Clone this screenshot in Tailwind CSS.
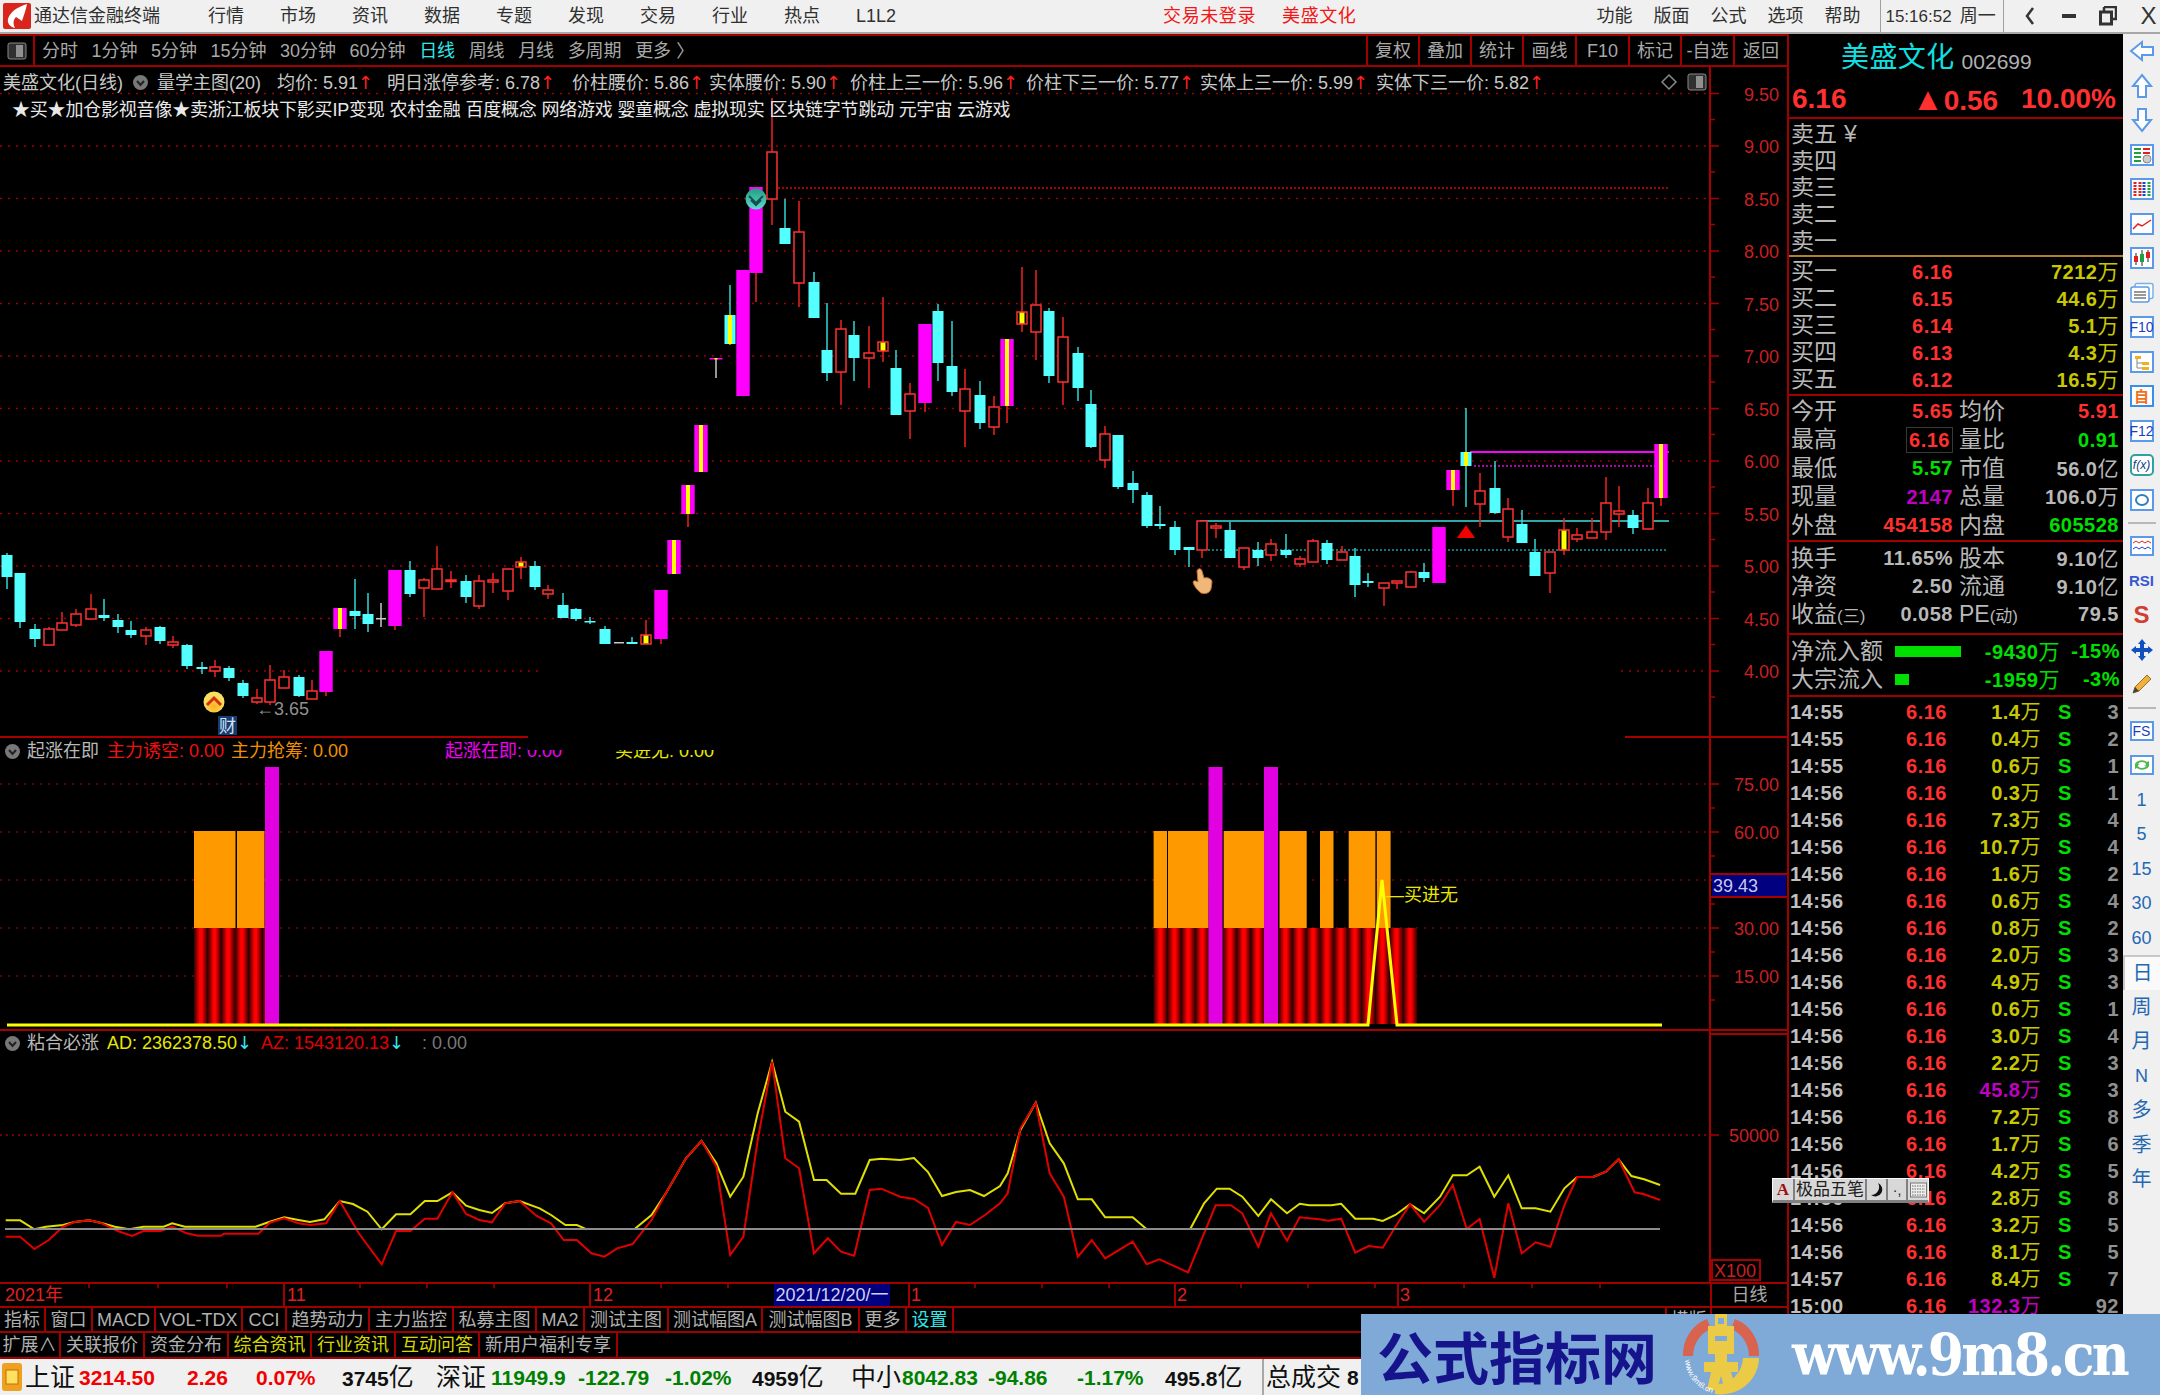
<!DOCTYPE html>
<html>
<head>
<meta charset="utf-8">
<script src="https://cdn.jsdelivr.net/npm/@tailwindcss/browser@4"></script>
<title>通达信金融终端</title>
</head>
<body class="w-[2160px] h-[1395px] relative overflow-hidden bg-black font-['Liberation_Sans','Noto_Sans_CJK_SC',sans-serif] text-[18px] leading-none">

<!-- title bar -->
<div class="h-[34px] flex items-center bg-[#f0f0f0] border-b-2 border-[#a8a8a8] text-[#303030]">
	<svg class="w-[28px] h-[26px] ml-[3px]" viewBox="0 0 28 26"><rect width="28" height="26" rx="2" fill="#d8261c"/><path d="M24 1 C14 4 7 9 5 16 C4 20 7 24 12 25 C10 21 10 17 13 14 L19 18 C21 12 23 6 24 1Z" fill="#fff"/></svg>
	<span class="ml-[3px] w-[174px]">通达信金融终端</span>
	<div class="flex gap-[36px]">
		<span>行情</span><span>市场</span><span>资讯</span><span>数据</span><span>专题</span><span>发现</span><span>交易</span><span>行业</span><span>热点</span><span>L1L2</span>
	</div>
	<span class="ml-[267px] tracking-[0.6px] text-[#f01818]">交易未登录</span>
	<span class="ml-[26px] tracking-[0.6px] text-[#f01818]">美盛文化</span>
	<div class="ml-[240px] flex gap-[21px]"><span>功能</span><span>版面</span><span>公式</span><span>选项</span><span>帮助</span></div>
	<div class="ml-[20px] h-full border-l border-r border-[#a0a0a0] w-[124px] flex items-center pl-[4px] gap-[8px] text-[17px]"><span>15:16:52</span><span class="text-[18px]">周一</span></div>
	<div class="flex items-center gap-[21px] ml-[20px]">
		<svg class="w-[12px] h-[20px]" viewBox="0 0 12 20"><path d="M9 2 L3 10 L9 18" fill="none" stroke="#333" stroke-width="2.5"/></svg>
		<svg class="w-[14px] h-[6px] ml-[5px]" viewBox="0 0 14 6"><rect y="1" width="14" height="4" fill="#333"/></svg>
		<svg class="w-[18px] h-[20px] ml-[2px]" viewBox="0 0 18 20"><path d="M5 1 H17 V13 H13 M5 1 V6" fill="none" stroke="#333" stroke-width="2.5"/><rect x="1.5" y="6" width="11" height="12" fill="none" stroke="#333" stroke-width="3"/></svg>
		<span class="text-[24px] text-[#333] ml-[2px]">X</span>
	</div>
</div>

<div class="flex h-[1325px]">
	<!-- left: period bar, charts, tabs -->
	<div class="w-[1787px] shrink-0 flex flex-col">
		<div class="h-[33px] shrink-0 flex items-center border-y-2 border-[#a00000] text-[#a8a8a8]">
			<div class="w-[35px] h-full border-r-2 border-[#a00000] flex items-center justify-center">
				<svg class="w-[20px] h-[18px]" viewBox="0 0 20 18"><rect x="1" y="1" width="18" height="16" rx="2" fill="#303030" stroke="#888"/><rect x="9" y="3" width="7" height="12" fill="#909090"/></svg>
			</div>
			<div class="ml-[7px] flex gap-[13.5px]">
				<span>分时</span><span>1分钟</span><span>5分钟</span><span>15分钟</span><span>30分钟</span><span>60分钟</span><span class="text-[#30e8e8]">日线</span><span>周线</span><span>月线</span><span>多周期</span><span>更多 〉</span>
			</div>
			<div class="ml-auto h-full flex">
				<span class="w-[52px] h-full border-l-2 border-[#a00000] flex items-center justify-center">复权</span>
				<span class="w-[52px] h-full border-l-2 border-[#a00000] flex items-center justify-center">叠加</span>
				<span class="w-[52px] h-full border-l-2 border-[#a00000] flex items-center justify-center">统计</span>
				<span class="w-[53px] h-full border-l-2 border-[#a00000] flex items-center justify-center">画线</span>
				<span class="w-[53px] h-full border-l-2 border-[#a00000] flex items-center justify-center">F10</span>
				<span class="w-[52px] h-full border-l-2 border-[#a00000] flex items-center justify-center">标记</span>
				<span class="w-[53px] h-full border-l-2 border-[#a00000] flex items-center justify-center">-自选</span>
				<span class="w-[54px] h-full border-l-2 border-[#a00000] flex items-center justify-center">返回</span>
			</div>
		</div>

		<div class="relative h-[1215px] shrink-0">
			<svg id="chart" class="block" width="1787" height="1215" viewBox="0 67 1787 1215" font-family="Liberation Sans, Noto Sans CJK SC, sans-serif" font-size="18"></svg>

			<!-- main chart legend -->
			<div class="absolute left-[3px] top-[3px] h-[25px] flex items-center text-[#c8c8c8]">
				<span class="w-[130px]">美盛文化(日线)</span>
				<span class="w-[24px] flex"><svg class="w-[15px] h-[15px]" viewBox="0 0 15 15"><circle cx="7.5" cy="7.5" r="7.5" fill="#787878"/><path d="M4 6 L7.5 10 L11 6" fill="none" stroke="#222" stroke-width="2"/></svg></span>
				<span class="w-[120px]">量学主图(20)</span>
				<span class="w-[110px]">均价: 5.91<b class="text-[#ff2020] font-normal font-['DejaVu_Sans']">↑</b></span>
				<span class="w-[185px]">明日涨停参考: 6.78<b class="text-[#ff2020] font-normal font-['DejaVu_Sans']">↑</b></span>
				<span class="w-[137px]">价柱腰价: 5.86<b class="text-[#ff2020] font-normal font-['DejaVu_Sans']">↑</b></span>
				<span class="w-[141px]">实体腰价: 5.90<b class="text-[#ff2020] font-normal font-['DejaVu_Sans']">↑</b></span>
				<span class="w-[176px]">价柱上三一价: 5.96<b class="text-[#ff2020] font-normal font-['DejaVu_Sans']">↑</b></span>
				<span class="w-[174px]">价柱下三一价: 5.77<b class="text-[#ff2020] font-normal font-['DejaVu_Sans']">↑</b></span>
				<span class="w-[176px]">实体上三一价: 5.99<b class="text-[#ff2020] font-normal font-['DejaVu_Sans']">↑</b></span>
				<span class="w-[180px]">实体下三一价: 5.82<b class="text-[#ff2020] font-normal font-['DejaVu_Sans']">↑</b></span>
			</div>
			<div class="absolute left-[1660px] top-[6px] flex items-center gap-[9px]">
				<svg class="w-[18px] h-[18px]" viewBox="0 0 18 18"><path d="M9 2 L16 9 L9 16 L2 9Z" fill="none" stroke="#888" stroke-width="1.5"/></svg>
				<svg class="w-[20px] h-[18px]" viewBox="0 0 20 18"><rect x="1" y="1" width="18" height="16" rx="2" fill="#303030" stroke="#888"/><rect x="9" y="3" width="7" height="12" fill="#909090"/></svg>
			</div>
			<div class="absolute left-[12px] top-[30px] h-[25px] flex items-center text-[#e8e8e8] tracking-[-0.2px] whitespace-pre">★买★加仓影视音像★卖浙江板块下影买IP变现 农村金融 百度概念 网络游戏 婴童概念 虚拟现实 区块链字节跳动 元宇宙 云游戏</div>

			<!-- first indicator legend -->
			<div class="absolute left-[5px] top-[672px] h-[24px] flex items-center">
				<svg class="w-[15px] h-[15px] mr-[7px]" viewBox="0 0 15 15"><circle cx="7.5" cy="7.5" r="7.5" fill="#787878"/><path d="M4 6 L7.5 10 L11 6" fill="none" stroke="#222" stroke-width="2"/></svg>
				<span class="w-[80px] text-[#b8b8b8]">起涨在即</span>
				<span class="w-[124px] text-[#f01010]">主力诱空: 0.00</span>
				<span class="w-[214px] text-[#f09000]">主力抢筹: 0.00</span>
				<span class="w-[170px] text-[#f000f0]">起涨在即: 0.00</span>
				<span class="text-[#e8e800]">买进无: 0.00</span>
			</div>
			<div class="absolute left-[528px] top-[667px] w-[1097px] h-[16px] bg-black"></div>

			<!-- second indicator legend -->
			<div class="absolute left-[5px] top-[964px] h-[24px] flex items-center">
				<svg class="w-[15px] h-[15px] mr-[7px]" viewBox="0 0 15 15"><circle cx="7.5" cy="7.5" r="7.5" fill="#787878"/><path d="M4 6 L7.5 10 L11 6" fill="none" stroke="#222" stroke-width="2"/></svg>
				<span class="w-[80px] text-[#b8b8b8]">粘合必涨</span>
				<span class="w-[154px] text-[#e8e800]">AD: 2362378.50<b class="text-[#30e8f0] font-normal font-['DejaVu_Sans']">↓</b></span>
				<span class="w-[161px] text-[#e00000]">AZ: 1543120.13<b class="text-[#30e8f0] font-normal font-['DejaVu_Sans']">↓</b></span>
				<span class="text-[#787878]">: 0.00</span>
			</div>
		</div>

		<!-- date axis -->
		<div class="relative h-[24px] shrink-0 flex items-center border-t-2 border-[#a00000] text-[#e02020]">
			<span class="w-[283px] h-full pl-[5px] flex items-center">2021年</span>
			<span class="w-[306px] h-full pl-[2px] flex items-center border-l-2 border-[#a00000]">11</span>
			<span class="w-[319px] h-full pl-[2px] flex items-center border-l-2 border-[#a00000]">12</span>
			<span class="w-[266px] h-full pl-[1px] flex items-center border-l-2 border-[#a00000]">1</span>
			<span class="w-[223px] h-full pl-[1px] flex items-center border-l-2 border-[#a00000]">2</span>
			<span class="w-[313px] h-full pl-[1px] flex items-center border-l-2 border-[#a00000]">3</span>
			<span class="w-[77px] h-full flex items-center justify-center border-l-2 border-[#a00000] text-[#a8a8a8]">日线</span>
			<span class="absolute left-[774px] top-0 w-[116px] h-full flex items-center justify-center bg-[#000080] text-[#d0d0f0] whitespace-nowrap">2021/12/20/一</span>
			<svg id="dateTicks" class="absolute left-0 top-0" width="1710" height="6"></svg>
		</div>

		<!-- tabs -->
		<div class="h-[25px] shrink-0 flex border-t-2 border-[#a00000] text-[#b0b0b0]">
			<span class="w-[46px] flex items-center justify-center border-r-2 border-[#a00000]">指标</span>
			<span class="w-[47px] flex items-center justify-center border-r-2 border-[#a00000]">窗口</span>
			<span class="w-[63px] flex items-center justify-center border-r-2 border-[#a00000]">MACD</span>
			<span class="w-[87px] flex items-center justify-center border-r-2 border-[#a00000]">VOL-TDX</span>
			<span class="w-[44px] flex items-center justify-center border-r-2 border-[#a00000]">CCI</span>
			<span class="w-[83px] flex items-center justify-center border-r-2 border-[#a00000]">趋势动力</span>
			<span class="w-[84px] flex items-center justify-center border-r-2 border-[#a00000]">主力监控</span>
			<span class="w-[83px] flex items-center justify-center border-r-2 border-[#a00000]">私募主图</span>
			<span class="w-[48px] flex items-center justify-center border-r-2 border-[#a00000]">MA2</span>
			<span class="w-[84px] flex items-center justify-center border-r-2 border-[#a00000]">测试主图</span>
			<span class="w-[94px] flex items-center justify-center border-r-2 border-[#a00000]">测试幅图A</span>
			<span class="w-[97px] flex items-center justify-center border-r-2 border-[#a00000]">测试幅图B</span>
			<span class="w-[47px] flex items-center justify-center border-r-2 border-[#a00000]">更多</span>
			<span class="w-[47px] flex items-center justify-center border-r-2 border-[#a00000] text-[#30e8e8]">设置</span>
			<span class="ml-[711px] w-[47px] flex items-center justify-center border-x-2 border-[#a00000]">横版</span>
		</div>
		<div class="h-[28px] shrink-0 flex border-y-2 border-[#a00000] text-[#b0b0b0]">
			<span class="w-[61px] flex items-center justify-center border-r-2 border-[#a00000]">扩展∧</span>
			<span class="w-[84px] flex items-center justify-center border-r-2 border-[#a00000]">关联报价</span>
			<span class="w-[84px] flex items-center justify-center border-r-2 border-[#a00000]">资金分布</span>
			<span class="w-[83px] flex items-center justify-center border-r-2 border-[#a00000] text-[#d8d800]">综合资讯</span>
			<span class="w-[84px] flex items-center justify-center border-r-2 border-[#a00000] text-[#d8d800]">行业资讯</span>
			<span class="w-[84px] flex items-center justify-center border-r-2 border-[#a00000] text-[#d8d800]">互动问答</span>
			<span class="w-[138px] flex items-center justify-center border-r-2 border-[#a00000]">新用户福利专享</span>
		</div>
	</div>

	<!-- quote panel -->
	<div class="w-[336px] shrink-0 flex flex-col overflow-hidden border-l-2 border-[#a00000] text-[23px] text-[#b8b8b8]">
		<div class="h-[47px] shrink-0 flex items-center pl-[52px]">
			<span class="text-[28px] text-[#10e0e0] tracking-[0.4px]">美盛文化</span>
			<span class="ml-[7px] mt-[8px] text-[21px] text-[#b0b0b0]">002699</span>
		</div>
		<div class="h-[38px] shrink-0 flex items-center pl-[3px] border-b-2 border-[#a00000] text-[28px] font-bold text-[#ff3030]">
			<span class="w-[120px]">6.16</span>
			<span class="w-[109px] whitespace-nowrap"><span class="text-[32px] leading-none">▲</span>0.56</span>
			<span>10.00%</span>
		</div>
		<div class="h-[138px] shrink-0 flex flex-col pl-[2px] pt-[2px] border-b-2 border-[#b08030]">
			<div class="h-[27.2px] flex items-center">卖五<span class="ml-[7px] text-[#b8b8b8]">¥</span></div>
			<div class="h-[27.2px] flex items-center">卖四</div>
			<div class="h-[27.2px] flex items-center">卖三</div>
			<div class="h-[27.2px] flex items-center">卖二</div>
			<div class="h-[27.2px] flex items-center">卖一</div>
		</div>
		<div class="h-[139px] shrink-0 flex flex-col pl-[2px] pt-[1px] border-b-2 border-[#a00000]">
			<div class="h-[27px] flex items-center"><span class="w-[50px]">买一</span><span class="w-[112px] text-right text-[20px] font-bold tracking-[0.5px] text-[#ff3030]">6.16</span><span class="w-[166px] text-right text-[20px] font-bold tracking-[0.5px] text-[#c8c800]">7212<span class="font-normal text-[21px]">万</span></span></div>
			<div class="h-[27px] flex items-center"><span class="w-[50px]">买二</span><span class="w-[112px] text-right text-[20px] font-bold tracking-[0.5px] text-[#ff3030]">6.15</span><span class="w-[166px] text-right text-[20px] font-bold tracking-[0.5px] text-[#c8c800]">44.6<span class="font-normal text-[21px]">万</span></span></div>
			<div class="h-[27px] flex items-center"><span class="w-[50px]">买三</span><span class="w-[112px] text-right text-[20px] font-bold tracking-[0.5px] text-[#ff3030]">6.14</span><span class="w-[166px] text-right text-[20px] font-bold tracking-[0.5px] text-[#c8c800]">5.1<span class="font-normal text-[21px]">万</span></span></div>
			<div class="h-[27px] flex items-center"><span class="w-[50px]">买四</span><span class="w-[112px] text-right text-[20px] font-bold tracking-[0.5px] text-[#ff3030]">6.13</span><span class="w-[166px] text-right text-[20px] font-bold tracking-[0.5px] text-[#c8c800]">4.3<span class="font-normal text-[21px]">万</span></span></div>
			<div class="h-[27px] flex items-center"><span class="w-[50px]">买五</span><span class="w-[112px] text-right text-[20px] font-bold tracking-[0.5px] text-[#ff3030]">6.12</span><span class="w-[166px] text-right text-[20px] font-bold tracking-[0.5px] text-[#c8c800]">16.5<span class="font-normal text-[21px]">万</span></span></div>
		</div>
		<div class="h-[146px] shrink-0 flex flex-col pl-[2px] pt-[1px] border-b-2 border-[#a00000]">
			<div class="h-[28.5px] shrink-0 flex items-center"><span class="w-[50px]">今开</span><span class="w-[112px] text-right text-[20px] font-bold tracking-[0.5px] text-[#ff3030]">5.65</span><span class="w-[56px] ml-[6px]">均价</span><span class="w-[104px] text-right text-[20px] font-bold tracking-[0.5px] text-[#ff3030]">5.91</span></div>
			<div class="h-[28.5px] shrink-0 flex items-center"><span class="w-[50px]">最高</span><span class="w-[112px] flex justify-end"><span class="px-[2px] border border-[#383838] text-[20px] leading-[24px] font-bold tracking-[0.5px] text-[#ff3030]">6.16</span></span><span class="w-[56px] ml-[6px]">量比</span><span class="w-[104px] text-right text-[20px] font-bold tracking-[0.5px] text-[#00e000]">0.91</span></div>
			<div class="h-[28.5px] shrink-0 flex items-center"><span class="w-[50px]">最低</span><span class="w-[112px] text-right text-[20px] font-bold tracking-[0.5px] text-[#00e000]">5.57</span><span class="w-[56px] ml-[6px]">市值</span><span class="w-[104px] text-right text-[20px] font-bold tracking-[0.5px]">56.0<span class="font-normal text-[21px]">亿</span></span></div>
			<div class="h-[28.5px] shrink-0 flex items-center"><span class="w-[50px]">现量</span><span class="w-[112px] text-right text-[20px] font-bold tracking-[0.5px] text-[#c000c0]">2147</span><span class="w-[56px] ml-[6px]">总量</span><span class="w-[104px] text-right text-[20px] font-bold tracking-[0.5px]">106.0<span class="font-normal text-[21px]">万</span></span></div>
			<div class="h-[28.5px] shrink-0 flex items-center"><span class="w-[50px]">外盘</span><span class="w-[112px] text-right text-[20px] font-bold tracking-[0.5px] text-[#ff3030]">454158</span><span class="w-[56px] ml-[6px]">内盘</span><span class="w-[104px] text-right text-[20px] font-bold tracking-[0.5px] text-[#00e000]">605528</span></div>
		</div>
		<div class="h-[93px] shrink-0 flex flex-col pl-[2px] pt-[2px] border-b-2 border-[#a00000]">
			<div class="h-[28px] flex items-center"><span class="w-[50px]">换手</span><span class="w-[112px] text-right text-[20px] font-bold tracking-[0.5px]">11.65%</span><span class="w-[56px] ml-[6px]">股本</span><span class="w-[104px] text-right text-[20px] font-bold tracking-[0.5px]">9.10<span class="font-normal text-[21px]">亿</span></span></div>
			<div class="h-[28px] flex items-center"><span class="w-[50px]">净资</span><span class="w-[112px] text-right text-[20px] font-bold tracking-[0.5px]">2.50</span><span class="w-[56px] ml-[6px]">流通</span><span class="w-[104px] text-right text-[20px] font-bold tracking-[0.5px]">9.10<span class="font-normal text-[21px]">亿</span></span></div>
			<div class="h-[28px] flex items-center"><span class="w-[74px] whitespace-nowrap">收益<span class="text-[17px]">(三)</span></span><span class="w-[88px] text-right text-[20px] font-bold tracking-[0.5px]">0.058</span><span class="w-[72px] ml-[6px] whitespace-nowrap">PE<span class="text-[17px]">(动)</span></span><span class="w-[88px] text-right text-[20px] font-bold tracking-[0.5px]">79.5</span></div>
		</div>
		<div class="h-[62px] shrink-0 flex flex-col pl-[2px] pt-[2px] border-b-2 border-[#a00000] text-[#00e000]">
			<div class="h-[28px] flex items-center"><span class="w-[104px] text-[#b8b8b8]">净流入额</span><span class="w-[66px] h-[11px] bg-[#00e000]"></span><span class="w-[99px] text-right text-[20px] font-bold tracking-[0.5px]">-9430<span class="font-normal text-[21px]">万</span></span><span class="w-[60px] text-right text-[20px] font-bold tracking-[0.5px]">-15%</span></div>
			<div class="h-[28px] flex items-center"><span class="w-[104px] text-[#b8b8b8]">大宗流入</span><span class="w-[14px] h-[11px] bg-[#00e000]"></span><span class="w-[151px] text-right text-[20px] font-bold tracking-[0.5px]">-1959<span class="font-normal text-[21px]">万</span></span><span class="w-[60px] text-right text-[20px] font-bold tracking-[0.5px]">-3%</span></div>
		</div>
		<div class="flex flex-col pl-[1px] text-[20px] font-bold tracking-[0.5px] text-[#c0c0c0] pt-[1px]">
			<div class="h-[27.04px] flex items-center"><span class="w-[61px]">14:55</span><span class="w-[96px] text-right text-[#ff3030]">6.16</span><span class="w-[94px] text-right text-[#c8c800]">1.4<span class="font-normal">万</span></span><span class="w-[48px] text-center text-[#00e000]">S</span><span class="w-[30px] text-right text-[#909090]">3</span></div>
			<div class="h-[27.04px] flex items-center"><span class="w-[61px]">14:55</span><span class="w-[96px] text-right text-[#ff3030]">6.16</span><span class="w-[94px] text-right text-[#c8c800]">0.4<span class="font-normal">万</span></span><span class="w-[48px] text-center text-[#00e000]">S</span><span class="w-[30px] text-right text-[#909090]">2</span></div>
			<div class="h-[27.04px] flex items-center"><span class="w-[61px]">14:55</span><span class="w-[96px] text-right text-[#ff3030]">6.16</span><span class="w-[94px] text-right text-[#c8c800]">0.6<span class="font-normal">万</span></span><span class="w-[48px] text-center text-[#00e000]">S</span><span class="w-[30px] text-right text-[#909090]">1</span></div>
			<div class="h-[27.04px] flex items-center"><span class="w-[61px]">14:56</span><span class="w-[96px] text-right text-[#ff3030]">6.16</span><span class="w-[94px] text-right text-[#c8c800]">0.3<span class="font-normal">万</span></span><span class="w-[48px] text-center text-[#00e000]">S</span><span class="w-[30px] text-right text-[#909090]">1</span></div>
			<div class="h-[27.04px] flex items-center"><span class="w-[61px]">14:56</span><span class="w-[96px] text-right text-[#ff3030]">6.16</span><span class="w-[94px] text-right text-[#c8c800]">7.3<span class="font-normal">万</span></span><span class="w-[48px] text-center text-[#00e000]">S</span><span class="w-[30px] text-right text-[#909090]">4</span></div>
			<div class="h-[27.04px] flex items-center"><span class="w-[61px]">14:56</span><span class="w-[96px] text-right text-[#ff3030]">6.16</span><span class="w-[94px] text-right text-[#c8c800]">10.7<span class="font-normal">万</span></span><span class="w-[48px] text-center text-[#00e000]">S</span><span class="w-[30px] text-right text-[#909090]">4</span></div>
			<div class="h-[27.04px] flex items-center"><span class="w-[61px]">14:56</span><span class="w-[96px] text-right text-[#ff3030]">6.16</span><span class="w-[94px] text-right text-[#c8c800]">1.6<span class="font-normal">万</span></span><span class="w-[48px] text-center text-[#00e000]">S</span><span class="w-[30px] text-right text-[#909090]">2</span></div>
			<div class="h-[27.04px] flex items-center"><span class="w-[61px]">14:56</span><span class="w-[96px] text-right text-[#ff3030]">6.16</span><span class="w-[94px] text-right text-[#c8c800]">0.6<span class="font-normal">万</span></span><span class="w-[48px] text-center text-[#00e000]">S</span><span class="w-[30px] text-right text-[#909090]">4</span></div>
			<div class="h-[27.04px] flex items-center"><span class="w-[61px]">14:56</span><span class="w-[96px] text-right text-[#ff3030]">6.16</span><span class="w-[94px] text-right text-[#c8c800]">0.8<span class="font-normal">万</span></span><span class="w-[48px] text-center text-[#00e000]">S</span><span class="w-[30px] text-right text-[#909090]">2</span></div>
			<div class="h-[27.04px] flex items-center"><span class="w-[61px]">14:56</span><span class="w-[96px] text-right text-[#ff3030]">6.16</span><span class="w-[94px] text-right text-[#c8c800]">2.0<span class="font-normal">万</span></span><span class="w-[48px] text-center text-[#00e000]">S</span><span class="w-[30px] text-right text-[#909090]">3</span></div>
			<div class="h-[27.04px] flex items-center"><span class="w-[61px]">14:56</span><span class="w-[96px] text-right text-[#ff3030]">6.16</span><span class="w-[94px] text-right text-[#c8c800]">4.9<span class="font-normal">万</span></span><span class="w-[48px] text-center text-[#00e000]">S</span><span class="w-[30px] text-right text-[#909090]">3</span></div>
			<div class="h-[27.04px] flex items-center"><span class="w-[61px]">14:56</span><span class="w-[96px] text-right text-[#ff3030]">6.16</span><span class="w-[94px] text-right text-[#c8c800]">0.6<span class="font-normal">万</span></span><span class="w-[48px] text-center text-[#00e000]">S</span><span class="w-[30px] text-right text-[#909090]">1</span></div>
			<div class="h-[27.04px] flex items-center"><span class="w-[61px]">14:56</span><span class="w-[96px] text-right text-[#ff3030]">6.16</span><span class="w-[94px] text-right text-[#c8c800]">3.0<span class="font-normal">万</span></span><span class="w-[48px] text-center text-[#00e000]">S</span><span class="w-[30px] text-right text-[#909090]">4</span></div>
			<div class="h-[27.04px] flex items-center"><span class="w-[61px]">14:56</span><span class="w-[96px] text-right text-[#ff3030]">6.16</span><span class="w-[94px] text-right text-[#c8c800]">2.2<span class="font-normal">万</span></span><span class="w-[48px] text-center text-[#00e000]">S</span><span class="w-[30px] text-right text-[#909090]">3</span></div>
			<div class="h-[27.04px] flex items-center"><span class="w-[61px]">14:56</span><span class="w-[96px] text-right text-[#ff3030]">6.16</span><span class="w-[94px] text-right text-[#c000c0]">45.8<span class="font-normal">万</span></span><span class="w-[48px] text-center text-[#00e000]">S</span><span class="w-[30px] text-right text-[#909090]">3</span></div>
			<div class="h-[27.04px] flex items-center"><span class="w-[61px]">14:56</span><span class="w-[96px] text-right text-[#ff3030]">6.16</span><span class="w-[94px] text-right text-[#c8c800]">7.2<span class="font-normal">万</span></span><span class="w-[48px] text-center text-[#00e000]">S</span><span class="w-[30px] text-right text-[#909090]">8</span></div>
			<div class="h-[27.04px] flex items-center"><span class="w-[61px]">14:56</span><span class="w-[96px] text-right text-[#ff3030]">6.16</span><span class="w-[94px] text-right text-[#c8c800]">1.7<span class="font-normal">万</span></span><span class="w-[48px] text-center text-[#00e000]">S</span><span class="w-[30px] text-right text-[#909090]">6</span></div>
			<div class="h-[27.04px] flex items-center"><span class="w-[61px]">14:56</span><span class="w-[96px] text-right text-[#ff3030]">6.16</span><span class="w-[94px] text-right text-[#c8c800]">4.2<span class="font-normal">万</span></span><span class="w-[48px] text-center text-[#00e000]">S</span><span class="w-[30px] text-right text-[#909090]">5</span></div>
			<div class="h-[27.04px] flex items-center"><span class="w-[61px]">14:56</span><span class="w-[96px] text-right text-[#ff3030]">6.16</span><span class="w-[94px] text-right text-[#c8c800]">2.8<span class="font-normal">万</span></span><span class="w-[48px] text-center text-[#00e000]">S</span><span class="w-[30px] text-right text-[#909090]">8</span></div>
			<div class="h-[27.04px] flex items-center"><span class="w-[61px]">14:56</span><span class="w-[96px] text-right text-[#ff3030]">6.16</span><span class="w-[94px] text-right text-[#c8c800]">3.2<span class="font-normal">万</span></span><span class="w-[48px] text-center text-[#00e000]">S</span><span class="w-[30px] text-right text-[#909090]">5</span></div>
			<div class="h-[27.04px] flex items-center"><span class="w-[61px]">14:56</span><span class="w-[96px] text-right text-[#ff3030]">6.16</span><span class="w-[94px] text-right text-[#c8c800]">8.1<span class="font-normal">万</span></span><span class="w-[48px] text-center text-[#00e000]">S</span><span class="w-[30px] text-right text-[#909090]">5</span></div>
			<div class="h-[27.04px] flex items-center"><span class="w-[61px]">14:57</span><span class="w-[96px] text-right text-[#ff3030]">6.16</span><span class="w-[94px] text-right text-[#c8c800]">8.4<span class="font-normal">万</span></span><span class="w-[48px] text-center text-[#00e000]">S</span><span class="w-[30px] text-right text-[#909090]">7</span></div>
			<div class="h-[27.04px] flex items-center"><span class="w-[61px]">15:00</span><span class="w-[96px] text-right text-[#ff3030]">6.16</span><span class="w-[94px] text-right text-[#c000c0]">132.3<span class="font-normal">万</span></span><span class="w-[48px]"></span><span class="w-[30px] text-right text-[#909090]">92</span></div>
		</div>
	</div>

	<!-- right tool strip -->
	<div class="w-[37px] shrink-0 bg-[#f0f0f0] flex flex-col items-center text-[#2468b4] text-[18px]">
		<div class="h-[34.5px] flex items-center"><svg class="w-[26px] h-[24px]" viewBox="0 0 26 24"><path d="M2 12 L13 3 V8 H24 V16 H13 V21Z" fill="#fff" stroke="#5a9ae8" stroke-width="2"/></svg></div>
		<div class="h-[34.5px] flex items-center"><svg class="w-[24px] h-[26px]" viewBox="0 0 24 26"><path d="M12 2 L21 13 H16 V24 H8 V13 H3Z" fill="#fff" stroke="#5a9ae8" stroke-width="2"/></svg></div>
		<div class="h-[34.5px] flex items-center"><svg class="w-[24px] h-[26px]" viewBox="0 0 24 26"><path d="M12 24 L21 13 H16 V2 H8 V13 H3Z" fill="#fff" stroke="#5a9ae8" stroke-width="2"/></svg></div>
		<div class="h-[34.5px] flex items-center"><svg class="w-[24px] h-[22px]" viewBox="0 0 24 22"><rect x="1" y="1" width="22" height="20" fill="#fff" stroke="#5a9ae8" stroke-width="2"/><path d="M4 5h7M4 9h7M4 13h7M4 17h7" stroke="#20a040" stroke-width="2"/><path d="M13 5h7M13 9h7" stroke="#e02020" stroke-width="2"/><circle cx="17" cy="15" r="4" fill="#ccc" stroke="#888"/></svg></div>
		<div class="h-[34.5px] flex items-center"><svg class="w-[24px] h-[22px]" viewBox="0 0 24 22"><rect x="1" y="1" width="22" height="20" fill="#fff" stroke="#5a9ae8" stroke-width="2"/><path d="M5 4v14M10 4v14" stroke="#e02020" stroke-width="3" stroke-dasharray="2 1"/><path d="M14 4v14" stroke="#2040d0" stroke-width="3" stroke-dasharray="2 1"/><path d="M19 4v14" stroke="#20a040" stroke-width="3" stroke-dasharray="2 1"/></svg></div>
		<div class="h-[34.5px] flex items-center"><svg class="w-[24px] h-[22px]" viewBox="0 0 24 22"><rect x="1" y="1" width="22" height="20" fill="#fff" stroke="#5a9ae8" stroke-width="2"/><path d="M3 16 L8 11 L12 13 L21 7" fill="none" stroke="#e02020" stroke-width="1.5"/></svg></div>
		<div class="h-[34.5px] flex items-center"><svg class="w-[24px] h-[22px]" viewBox="0 0 24 22"><rect x="1" y="1" width="22" height="20" fill="#fff" stroke="#5a9ae8" stroke-width="2"/><path d="M6 6v12M12 3v16M18 3v12" stroke="#222" stroke-width="1"/><rect x="4" y="9" width="4" height="6" fill="#e02020"/><rect x="10" y="7" width="4" height="8" fill="#20a040"/><rect x="16" y="5" width="4" height="6" fill="#e02020"/></svg></div>
		<div class="h-[34.5px] flex items-center"><svg class="w-[24px] h-[22px]" viewBox="0 0 24 22"><rect x="5" y="1.5" width="18" height="15" rx="2" fill="#fff" stroke="#7ab0e8" stroke-width="1.5"/><rect x="1" y="5" width="18" height="15" rx="2" fill="#fff" stroke="#5a9ae8" stroke-width="1.5"/><path d="M4 10h12M4 13h12M4 16h12" stroke="#777" stroke-width="1.5"/></svg></div>
		<div class="h-[34.5px] flex items-center"><span class="w-[24px] h-[22px] bg-white border-2 border-[#5a9ae8] flex items-center justify-center text-[14px] text-[#2040c0]">F10</span></div>
		<div class="h-[34.5px] flex items-center"><svg class="w-[24px] h-[22px]" viewBox="0 0 24 22"><rect x="1" y="1" width="22" height="20" fill="#fff" stroke="#5a9ae8" stroke-width="2"/><path d="M5 5h6v3h-6zM12 11h7v3h-7zM12 16h7v3h-7z" fill="#f0b020"/><path d="M7 8v9h5M7 12h5" stroke="#888" fill="none"/></svg></div>
		<div class="h-[34.5px] flex items-center"><span class="w-[24px] h-[22px] bg-white border-2 border-[#3a90e8] flex items-center justify-center text-[15px] font-bold text-[#f07020]">自</span></div>
		<div class="h-[34.5px] flex items-center"><span class="w-[24px] h-[22px] bg-white border-2 border-[#5a9ae8] flex items-center justify-center text-[14px] text-[#2040c0]">F12</span></div>
		<div class="h-[34.5px] flex items-center"><span class="w-[24px] h-[22px] bg-white border-2 border-[#30a0a0] rounded-[5px] flex items-center justify-center text-[12px] italic text-[#104080]">f(x)</span></div>
		<div class="h-[34.5px] flex items-center"><svg class="w-[24px] h-[22px]" viewBox="0 0 24 22"><rect x="1" y="1" width="22" height="20" fill="#fff" stroke="#5a9ae8" stroke-width="2"/><ellipse cx="12" cy="11" rx="6" ry="5" fill="none" stroke="#3080c0" stroke-width="2"/></svg></div>
		<div class="h-[12px] w-full flex items-center"><div class="w-[28px] mx-auto border-t-2 border-[#b8b8b8]"></div></div>
		<div class="h-[34.5px] flex items-center"><svg class="w-[24px] h-[20px]" viewBox="0 0 24 20"><rect x="1" y="1" width="22" height="18" fill="#fff" stroke="#5a9ae8" stroke-width="2"/><path d="M3 7l3-2 3 2 3-2 3 2 3-2 3 2" fill="none" stroke="#e02020"/><path d="M3 13l3-2 3 2 3-2 3 2 3-2 3 2" fill="none" stroke="#2040d0"/></svg></div>
		<div class="h-[34.5px] flex items-center font-bold text-[15px] text-[#3858d0]">RSI</div>
		<div class="h-[34.5px] flex items-center font-bold text-[24px] text-[#d04030]">S</div>
		<div class="h-[34.5px] flex items-center"><svg class="w-[24px] h-[24px]" viewBox="0 0 24 24"><path d="M12 1 L16 6 H14 V10 H18 V8 L23 12 L18 16 V14 H14 V18 H16 L12 23 L8 18 H10 V14 H6 V16 L1 12 L6 8 V10 H10 V6 H8Z" fill="#1050c0"/></svg></div>
		<div class="h-[34.5px] flex items-center"><svg class="w-[24px] h-[24px]" viewBox="0 0 24 24"><path d="M3 21 L5 15 L17 3 L21 7 L9 19Z" fill="#f0b040" stroke="#a07020"/><path d="M3 21 L5 15 L9 19Z" fill="#444"/></svg></div>
		<div class="h-[12px] w-full flex items-center"><div class="w-[28px] mx-auto border-t-2 border-[#b8b8b8]"></div></div>
		<div class="h-[34.5px] flex items-center"><span class="w-[24px] h-[20px] bg-white border-2 border-[#5a9ae8] flex items-center justify-center text-[14px] text-[#2040c0]">FS</span></div>
		<div class="h-[34.5px] flex items-center"><svg class="w-[24px] h-[20px]" viewBox="0 0 24 20"><rect x="1" y="1" width="22" height="18" fill="#fff" stroke="#5a9ae8" stroke-width="2"/><path d="M5 9a7 5 0 0 1 12-2l2-1v5h-5l2-1a4 3 0 0 0-8 0zM19 11a7 5 0 0 1-12 2l-2 1v-5h5l-2 1a4 3 0 0 0 8 0z" fill="#50b850"/></svg></div>
		<div class="h-[34.5px] flex items-center">1</div>
		<div class="h-[34.5px] flex items-center">5</div>
		<div class="h-[34.5px] flex items-center">15</div>
		<div class="h-[34.5px] flex items-center">30</div>
		<div class="h-[34.5px] flex items-center">60</div>
		<div class="h-[34.5px] w-full flex items-center justify-center text-[20px] bg-[#fafafa] border-t-2 border-l-2 border-[#c8c8c8]">日</div>
		<div class="h-[34.5px] flex items-center text-[20px]">周</div>
		<div class="h-[34.5px] flex items-center text-[20px]">月</div>
		<div class="h-[34.5px] flex items-center">N</div>
		<div class="h-[34.5px] flex items-center text-[20px]">多</div>
		<div class="h-[34.5px] flex items-center text-[20px]">季</div>
		<div class="h-[34.5px] flex items-center text-[20px]">年</div>
	</div>
</div>

<!-- index status bar -->
<div class="h-[36px] flex items-center bg-[#f0f0f0] text-[21px] font-bold text-[#101010] whitespace-nowrap">
	<span class="w-[25px] flex pl-[2px]"><svg class="w-[20px] h-[28px]" viewBox="0 0 20 28"><rect width="20" height="28" rx="3" fill="#f0a020"/><rect x="4" y="7" width="12" height="14" fill="#ffe060" stroke="#c07000"/></svg></span>
	<span class="w-[54px] text-[25px] font-normal">上证</span>
	<span class="w-[108px] text-[#f00000]">3214.50</span>
	<span class="w-[69px] text-[#f00000]">2.26</span>
	<span class="w-[86px] text-[#f00000]">0.07%</span>
	<span class="w-[94px]">3745<span class="text-[25px] font-normal">亿</span></span>
	<span class="w-[55px] text-[25px] font-normal">深证</span>
	<span class="w-[87px] text-[#008000]">11949.9</span>
	<span class="w-[87px] text-[#008000]">-122.79</span>
	<span class="w-[87px] text-[#008000]">-1.02%</span>
	<span class="w-[99px]">4959<span class="text-[25px] font-normal">亿</span></span>
	<span class="w-[51px] text-[25px] font-normal">中小</span>
	<span class="w-[86px] text-[#008000]">8042.83</span>
	<span class="w-[89px] text-[#008000]">-94.86</span>
	<span class="w-[88px] text-[#008000]">-1.17%</span>
	<span class="w-[97px]">495.8<span class="text-[25px] font-normal">亿</span></span>
	<span class="w-[4px] h-full border-l-2 border-[#a8a8a8]"></span>
	<span class="w-[81px] text-[25px] font-normal">总成交</span>
	<span>8</span>
</div>

<!-- input method bar -->
<div class="absolute left-[1772px] top-[1178px] w-[157px] h-[25px] flex bg-[#d8d8d8] border border-[#f8f8f8] border-b-[3px] border-b-[#808080] text-[#202020] text-[17px]">
	<span class="w-[22px] flex items-center justify-center font-bold text-[#a01010] border-r-2 border-[#808080] font-['Liberation_Serif']">A</span>
	<span class="w-[72px] flex items-center justify-center whitespace-nowrap border-r-2 border-[#808080]">极品五笔</span>
	<span class="w-[21px] flex items-center justify-center border-r-2 border-[#808080]"><svg class="w-[14px] h-[16px]" viewBox="0 0 14 16"><path d="M8 1 A7 7 0 1 1 1 13 A8 8 0 0 0 8 1Z" fill="#111"/></svg></span>
	<span class="w-[20px] flex items-center justify-center border-r-2 border-[#808080] text-[14px]">·,</span>
	<span class="flex-1 flex items-center justify-center"><svg class="w-[17px] h-[16px]" viewBox="0 0 17 16"><rect x="0.5" y="1" width="16" height="14" fill="#eee" stroke="#777"/><path d="M2 4h13M2 7h13M2 10h13M2 13h13" stroke="#666" stroke-dasharray="1.5 1"/></svg></span>
</div>

<!-- site banner over the corner -->
<div class="absolute left-[1361px] top-[1314px] w-[799px] h-[81px] bg-[#7fa9d6] flex items-center">
	<span class="ml-[16px] text-[56px] font-bold text-[#16148c] font-['Noto_Sans_CJK_SC'] whitespace-nowrap">公式指标网</span>
	<svg class="ml-[24px] w-[80px] h-[81px] shrink-0" viewBox="0 0 80 81" font-family="Liberation Sans">
		<path d="M26 5 A37 38 0 0 0 2 42 L12 42 A27 29 0 0 1 30 15Z" fill="#d8634f"/>
		<path d="M54 5 A37 38 0 0 1 78 42 L68 42 A27 29 0 0 0 50 15Z" fill="#d8634f"/>
		<path d="M78 44 A38 37 0 0 1 34 80 L34 70 A26 27 0 0 0 62 44Z" fill="#ebcb46"/>
		<path d="M34 0 H46 V12 H53 V40 H46 V48 H57 V58 H50 L55 76 H44 L40 62 L36 76 H26 L30 58 H23 V48 H34 V40 H27 V12 H34Z" fill="#ebcb46"/>
		<path d="M37 4 H43 V10 H37Z M34 22 H46 V27 H34Z" fill="#7fa9d6"/>
		<path id="ringText" d="M4 46 A36 36 0 0 0 32 79" fill="none"/>
		<text font-size="8" fill="#fff"><textPath href="#ringText">www.9m8.cn</textPath></text>
	</svg>
	<span class="ml-[31px] text-[58px] font-bold tracking-[-2.8px] text-white font-['DejaVu_Serif_Condensed','DejaVu_Serif'] whitespace-nowrap">www.9m8.cn</span>
</div>

<script>
	const svg = document.getElementById('chart')
	const NS = 'http://www.w3.org/2000/svg'

	function add(parent, tag, attrs, text) {
		const el = document.createElementNS(NS, tag)
		for (const k in attrs) el.setAttribute(k, attrs[k])
		if (text !== undefined) el.textContent = text
		parent.appendChild(el)
		return el
	}
	function rect(x, y, w, h, fill) { return add(svg, 'rect', {x, y, width: w, height: h, fill}) }
	function line(x1, y1, x2, y2, stroke, width, dash) {
		const a = {x1, y1, x2, y2, stroke, 'stroke-width': width || 1.5}
		if (dash) a['stroke-dasharray'] = dash
		return add(svg, 'line', a)
	}

	const RED = '#a80000', DOT = '#a00000', CYAN = '#54ffff', MAG = '#ff00ff', YEL = '#ffff00', CRED = '#ff3030'

	const defs = add(svg, 'defs', {})
	const band = add(defs, 'linearGradient', {id: 'band'})
	add(band, 'stop', {offset: '0', 'stop-color': '#300000'})
	add(band, 'stop', {offset: '0.42', 'stop-color': '#ff0000'})
	add(band, 'stop', {offset: '0.58', 'stop-color': '#ff0000'})
	add(band, 'stop', {offset: '1', 'stop-color': '#300000'})
	const coin = add(defs, 'radialGradient', {id: 'coin', cy: '0.7'})
	add(coin, 'stop', {offset: '0', 'stop-color': '#ffb020'})
	add(coin, 'stop', {offset: '1', 'stop-color': '#f8e060'})
	const jade = add(defs, 'linearGradient', {id: 'jade', x2: '0', y2: '1'})
	add(jade, 'stop', {offset: '0', 'stop-color': '#20a080'})
	add(jade, 'stop', {offset: '1', 'stop-color': '#60d8d0'})

	// grid and price axis
	;[9.5, 9, 8.5, 8, 7.5, 7, 6.5, 6, 5.5, 5, 4.5, 4].forEach(p => {
		const y = 461 + (6 - p) * 105
		if (p === 4) { line(0, y, 538, y, DOT, 1.5, '2 6'); line(1621, y, 1710, y, DOT, 1.5, '2 6') }
		else line(0, y, 1710, y, DOT, 1.5, '2 6')
		line(1711, y, 1719, y, RED)
		line(1711, y + 26, 1715, y + 26, RED)
		add(svg, 'text', {x: 1779, y: y + 7, 'text-anchor': 'end', fill: '#c82020'}, p.toFixed(2))
	})
	line(770, 188, 1668, 188, '#e00000', 1.5, '2 2')
	line(1710, 67, 1710, 1282, RED, 2)
	line(0, 737, 540, 737, RED, 2)
	line(1625, 737, 1787, 737, RED, 2)
	line(0, 1030, 1787, 1030, RED, 2)
	line(1711, 1034, 1787, 1034, RED, 2)

	// x, type, body top, body bottom, wick top, wick bottom
	const candles = [
		[7,'c',555,577,553,589],[20,'c',573,622,573,628],[35,'c',629,639,624,647],[49,'r',629,645,627,645],
		[62,'r',623,630,612,630],[76,'r',614,625,609,627],[91,'r',609,619,594,619],[104,'c',615,618,599,621],
		[118,'c',620,627,614,633],[131,'c',630,635,621,638],[146,'r',630,636,627,645],[160,'c',627,641,626,644],
		[173,'r',642,645,636,648],[187,'c',645,666,644,669],[202,'c',667,669,662,674],[215,'r',667,671,660,677],
		[229,'c',668,678,666,681],[243,'c',683,696,680,698],[257,'r',698,702,689,704],[270,'r',680,702,665,705],
		[284,'r',677,688,670,688],[299,'c',677,696,675,697],[312,'r',691,699,680,699],[326,'m',651,692,651,696],
		[340,'my',608,629,608,637],[355,'c',611,616,579,629],[368,'c',614,624,593,632],[381,'w',618,619,603,627],
		[395,'m',570,626,570,630],[410,'c',570,594,561,597],[424,'r',580,588,578,617],[437,'r',569,589,546,589],
		[451,'r',580,581,571,588],[466,'c',581,597,575,603],[479,'r',581,606,575,609],[493,'r',580,582,573,593],
		[508,'r',569,591,569,600],[521,'ry',562,567,557,579],[535,'c',566,587,561,590],[548,'r',590,594,585,599],
		[563,'c',605,618,593,618],[576,'c',609,619,608,621],[590,'c',621,622,617,624],[605,'c',629,644,626,644],
		[619,'w',642,644,642,644],[632,'c',642,644,637,644],[646,'ry',635,644,620,644],[661,'m',590,639,590,644],
		[674,'my',540,574,540,574],[688,'my',485,514,485,527],[701,'my',425,472,425,472],
		[716,'t',358,360,358,378],[730,'cy',315,344,285,345],[743,'m',270,396,270,396],[756,'m',187,273,187,302],
		[772,'r',152,199,98,225],[785,'c',228,244,199,244],[799,'r',232,283,201,307],[814,'c',282,318,272,318],
		[827,'c',350,373,303,381],[841,'r',329,372,320,405],[854,'c',335,358,321,381],[869,'r',353,358,326,388],
		[883,'ry',342,351,297,362],[896,'c',368,415,350,415],[910,'r',394,411,383,439],[925,'m',324,403,324,412],
		[938,'c',311,363,304,381],[952,'c',366,392,321,396],[965,'r',389,411,369,447],[980,'c',395,423,381,429],
		[994,'r',407,427,396,435],[1007,'my',339,406,339,423],[1022,'ry',312,324,267,332],[1036,'r',305,332,270,360],
		[1049,'c',311,376,308,383],[1063,'r',337,382,317,405],[1078,'c',353,388,347,401],[1091,'c',404,447,390,448],
		[1105,'r',434,460,426,468],[1118,'c',435,487,435,489],[1133,'c',483,490,471,503],[1147,'c',495,526,492,528],
		[1160,'c',524,526,506,529],[1175,'c',527,550,521,555],[1189,'c',547,550,547,567],[1202,'r',521,550,521,558],
		[1216,'r',526,528,523,538],[1230,'c',530,558,522,558],[1244,'r',548,567,548,570],[1258,'c',550,558,542,566],
		[1271,'r',544,555,539,561],[1286,'c',550,555,534,558],[1300,'r',559,564,556,567],[1313,'r',541,562,539,562],
		[1327,'c',543,560,540,564],[1342,'r',552,560,546,560],[1355,'c',556,585,548,597],[1368,'c',581,583,573,587],
		[1384,'r',583,588,583,606],[1397,'r',581,583,581,589],[1411,'r',572,587,571,587],[1424,'c',572,578,563,582],
		[1439,'m',527,583,527,583],[1453,'my',470,490,470,506],[1466,'cy',452,466,408,507],[1480,'r',491,504,473,527],
		[1495,'c',488,513,461,514],[1508,'r',509,537,498,542],[1522,'c',524,543,510,543],[1535,'c',552,576,539,576],
		[1550,'r',552,573,552,593],[1564,'ry',530,550,518,555],[1577,'r',535,539,528,542],[1592,'r',532,538,518,538],
		[1606,'r',503,532,477,540],[1619,'r',511,514,486,527],[1633,'c',515,528,510,534],[1648,'r',503,529,488,529],
		[1661,'my',444,498,444,506]
	]

	// level lines drawn under the candles
	line(1470, 452, 1669, 452, MAG, 2)
	line(1474, 466, 1665, 466, '#b000b0', 2, '2 2')
	line(1200, 521, 1669, 521, '#30a8a8', 2)
	line(1208, 550, 1667, 550, '#107878', 2, '2 2')

	candles.forEach(c => {
		const [x, t, top, bot, wt, wb] = c
		const h = Math.max(bot - top, 1.5)
		const wick = t === 'c' || t === 'cy' ? '#30d8d8' : t === 'w' || t === 't' ? '#c8c8c8' : '#f02020'
		if (wt < top || wb > bot) line(x, wt, x, wb, wick, 1.5)
		if (t === 'c') rect(x - 5.5, top, 11, h, CYAN)
		if (t === 'cy') { rect(x - 5.5, top, 11, h, CYAN); rect(x - 2, top, 4, h, YEL) }
		if (t === 'w') rect(x - 5, top, 10, 1.5, '#c8c8c8')
		if (t === 't') { rect(x - 6.5, top, 13, 1.5, MAG); rect(x - 1.5, top, 3, 1.5, YEL) }
		if (t === 'm') rect(x - 6.7, top, 13.4, h, MAG)
		if (t === 'my') { rect(x - 6.7, top, 13.4, h, MAG); rect(x - 2, top, 4, h, YEL) }
		if (t === 'r' || t === 'ry') {
			rect(x - 5.5, top, 11, h, '#000')
			if (t === 'ry') rect(x - 2.5, top, 5, h, YEL)
			add(svg, 'rect', {x: x - 5, y: top, width: 10, height: h, fill: 'none', stroke: CRED, 'stroke-width': 1.5})
		}
	})

	// markers on the main chart
	add(svg, 'polygon', {points: '1466,525 1475,538 1457,538', fill: '#f00000'})
	add(svg, 'circle', {cx: 756, cy: 199, r: 10.5, fill: 'url(#jade)'})
	add(svg, 'path', {d: 'M749 196 L756 203 L763 196 M751 200 L756 205 L761 200', fill: 'none', stroke: '#145050', 'stroke-width': 2})
	add(svg, 'ellipse', {cx: 214, cy: 702, rx: 10.5, ry: 10.5, fill: 'url(#coin)'})
	add(svg, 'path', {d: 'M207 705 L214 698 L221 705', fill: 'none', stroke: '#d03010', 'stroke-width': 3})
	rect(218, 716, 19, 19, '#143c70')
	add(svg, 'text', {x: 227.5, y: 732, 'text-anchor': 'middle', fill: '#d8e0f0', 'font-size': 17}, '财')
	add(svg, 'text', {x: 256, y: 715, fill: '#909090', 'font-size': 18}, '←3.65')
	// hand cursor
	add(svg, 'path', {d: 'M1197 571 C1198 568 1201 568 1202 571 L1204 578 C1208 577 1212 579 1212 582 L1211 589 C1209 594 1205 594 1201 593 C1197 590 1194 586 1193 582 C1194 580 1196 581 1198 582Z', fill: '#f0b878', stroke: '#c07030', 'stroke-width': 1})

	// first indicator
	;[[75, 784], [60, 832], [45, 880], [30, 928], [15, 976]].forEach(a => {
		line(0, a[1], 1710, a[1], '#800000', 1.5, '2 6')
		line(1711, a[1], 1719, a[1], RED)
		line(1711, a[1] + 24, 1715, a[1] + 24, RED)
		if (a[0] !== 45) add(svg, 'text', {x: 1779, y: a[1] + 7, 'text-anchor': 'end', fill: '#c82020'}, a[0].toFixed(2))
	})
	for (let i = 0; i < 6; i++) rect(194 + i * 13.67, 928, 13.67, 96, 'url(#band)')
	for (let i = 0; i < 19; i++) rect(1153.6 + i * 13.87, 928, 13.87, 96, 'url(#band)')
	;[[194, 41.5], [237, 27.5], [1153.6, 13.4], [1168, 40.5], [1223.7, 40.3], [1279.5, 27.2], [1320, 13.5], [1348.7, 26.7], [1376.8, 13.8]].forEach(b => rect(b[0], 831, b[1], 97, '#ff9900'))
	;[265, 1208.5, 1264].forEach(x => rect(x, 767, 14, 257, '#e000e0'))
	add(svg, 'polyline', {points: '7,1025 1368,1025 1382,880 1397,1025 1662,1025', fill: 'none', stroke: YEL, 'stroke-width': 3})
	add(svg, 'text', {x: 1386, y: 901, fill: '#e8e800'}, '—买进无')
	rect(1712, 875, 74, 22, '#000080')
	line(1711, 874, 1787, 874, RED, 2)
	line(1711, 897, 1787, 897, RED, 2)
	add(svg, 'text', {x: 1713, y: 892, fill: '#c8c8f0'}, '39.43')

	// second indicator
	line(0, 1135, 1710, 1135, DOT, 1.5, '2 4')
	line(1711, 1135, 1719, 1135, RED)
	add(svg, 'text', {x: 1779, y: 1142, 'text-anchor': 'end', fill: '#c82020'}, '50000')
	add(svg, 'rect', {x: 1712, y: 1260, width: 48, height: 20, fill: 'none', stroke: RED, 'stroke-width': 2})
	add(svg, 'text', {x: 1714, y: 1277, fill: '#c82020'}, 'X100')

	// points read off the crops: a = x/1.742, b = 1000+x/1.568, y = 1030+v/3
	const a = p => p.map(q => (q[0] / 1.742).toFixed(1) + ',' + (1030 + q[1] / 3).toFixed(1)).join(' ')
	const b = p => p.map(q => (1000 + q[0] / 1.568).toFixed(1) + ',' + (1030 + q[1] / 3).toFixed(1)).join(' ')
	const plot = (pts, stroke) => add(svg, 'polyline', {points: pts, fill: 'none', stroke, 'stroke-width': 2})

	plot(a([[10,571],[35,571],[60,598],[80,590],[110,585],[130,576],[155,571],[175,578],[200,590],[225,598],[250,590],[285,590],[300,580],[322,590],[445,590],[470,575],[495,562],[520,570],[540,576],[565,568],[592,513],[615,522],[640,545],[665,598],[690,553],[715,553],[740,513],[762,513],[788,487],[812,527],[835,540],[857,549],[880,520],[905,513],[940,535],[960,555],[985,585],[1005,585],[1022,598]]), '#e0e000')
	plot(a([[1105,598],[1135,555],[1160,490],[1195,385],[1222,333],[1248,400],[1272,500],[1295,440],[1320,250],[1345,95],[1368,245],[1392,275],[1418,450],[1440,450],[1465,491],[1490,491],[1515,390],[1535,386],[1568,390]]) + ' 914,1158 928,1172 942,1196 956,1192 970,1190 984,1196 ' + b([[0,468],[12,430],[32,300],[56,218],[78,340],[100,400],[122,508],[144,508],[165,562],[208,562],[230,598]]), '#e0e000')
	plot(b([[298,598],[320,520],[340,476],[360,476],[380,500],[405,558],[425,508],[450,550],[470,521],[485,526],[520,526],[535,521],[557,566],[585,566],[600,573],[620,555],[643,523],[665,550],[690,500],[710,436],[732,436],[752,410],[775,500],[797,436],[818,535],[840,535],[863,545],[885,475],[905,441],[930,441],[950,425],[970,388],[990,438],[1010,448],[1035,465]]), '#e0e000')
	plot(a([[10,620],[35,620],[60,657],[85,630],[110,590],[130,576],[155,571],[175,578],[205,603],[230,618],[250,603],[280,603],[300,590],[325,610],[345,617],[385,617],[390,611],[450,611],[470,578],[495,565],[520,580],[540,585],[568,580],[592,513],[625,610],[665,703],[690,603],[715,603],[740,566],[762,566],[788,487],[812,552],[835,570],[857,577],[880,520],[905,513],[935,558],[960,580],[982,630],[1005,630],[1030,670],[1053,680],[1075,655],[1102,642],[1135,570],[1160,490],[1195,385],[1222,333],[1248,410],[1272,675],[1295,620],[1320,330],[1345,95],[1368,385],[1392,415],[1418,670],[1442,625],[1465,665],[1488,677],[1515,480],[1535,476],[1568,500]]) + ' 914,1199 928,1208 942,1245 956,1222 970,1225 985,1215 ' + b([[0,520],[12,490],[32,295],[56,218],[78,430],[100,500],[122,680],[144,630],[165,685],[208,635],[230,703],[250,688],[295,727],[320,610],[338,526],[362,526],[380,550],[405,650],[425,550],[450,632],[470,562],[500,568],[515,572],[535,566],[557,668],[578,648],[600,653],[620,590],[643,523],[665,575],[690,525],[710,465],[732,597],[752,567],[775,743],[797,520],[818,670],[840,637],[863,650],[885,525],[905,441],[930,441],[950,425],[970,388],[995,487],[1010,493],[1035,510]]), '#e00000')
	line(5, 1229, 1660, 1229, '#8c8c8c', 2)

	// date axis ticks
	const dt = document.getElementById('dateTicks')
	;[89,158,227,360,427,494,661,728,975,1042,1109,1241,1308,1375,1464,1532,1600].forEach(x => add(dt, 'line', {x1: x, y1: 0, x2: x, y2: 4, stroke: RED, 'stroke-width': 1.5}))
</script>
</body>
</html>
